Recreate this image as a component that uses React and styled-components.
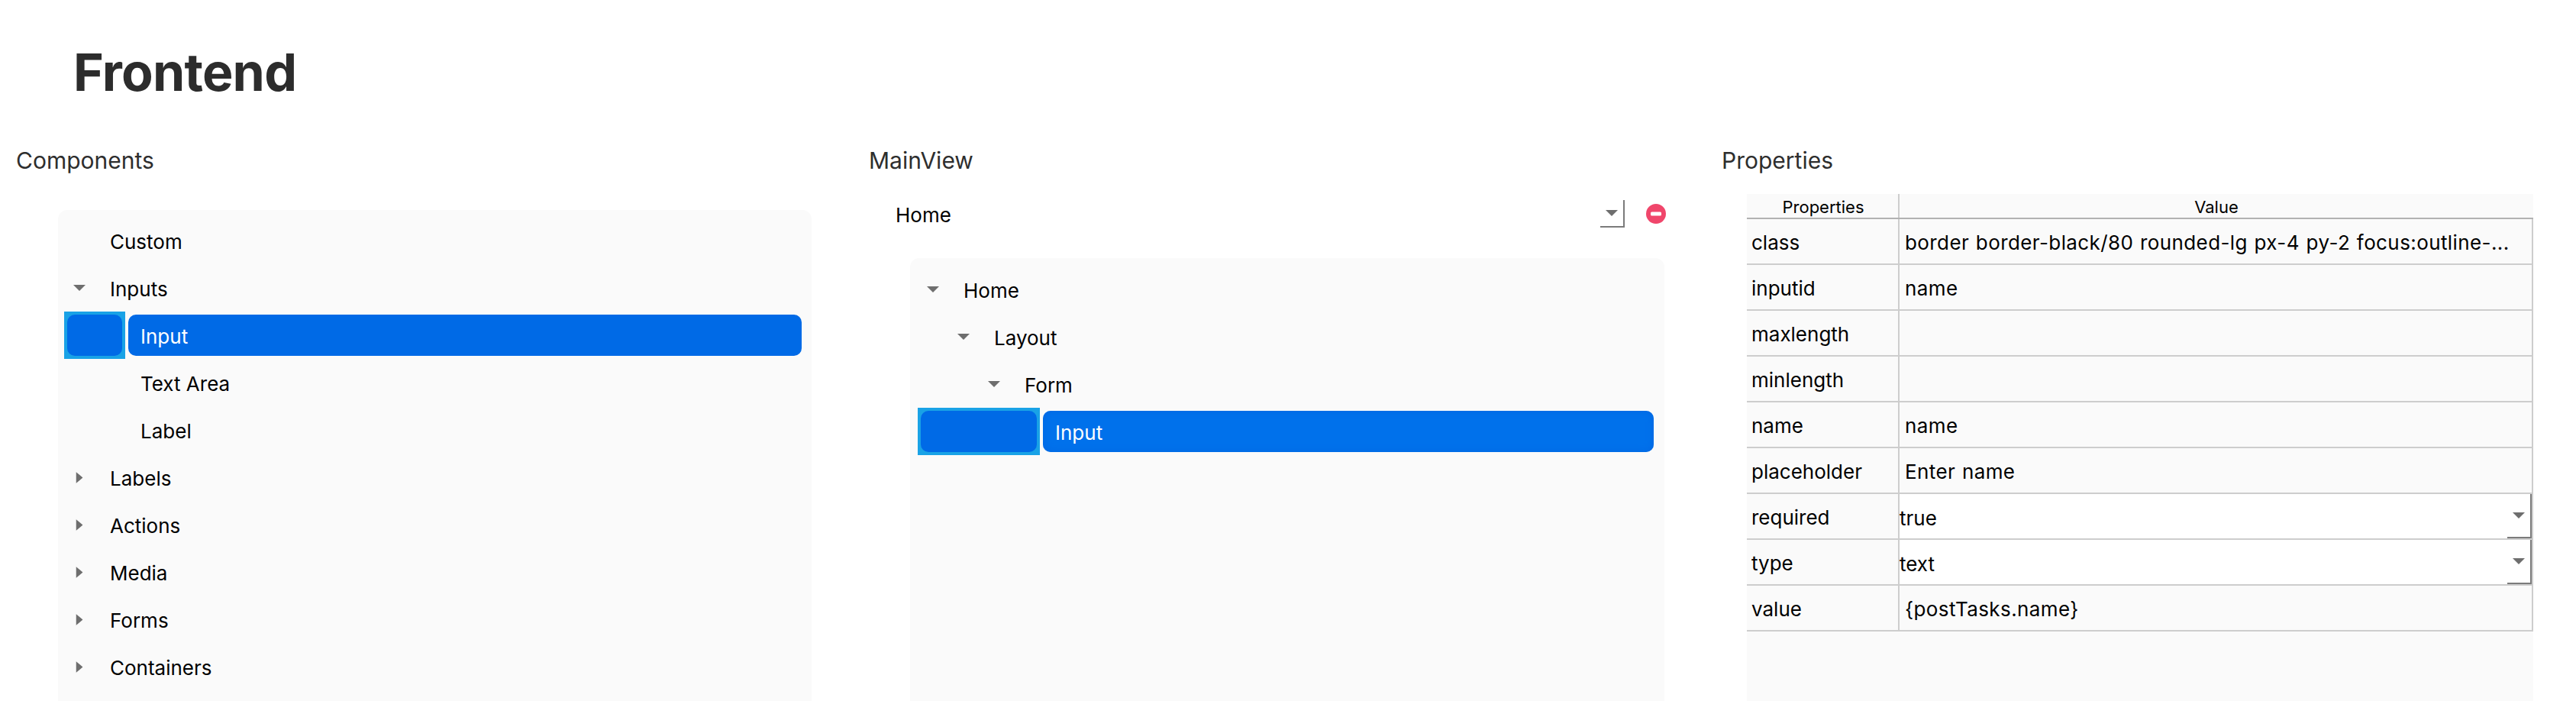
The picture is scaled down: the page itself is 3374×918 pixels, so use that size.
import React from "react";
import styled, { createGlobalStyle } from "styled-components";

const Global = createGlobalStyle`
  html, body { margin: 0; padding: 0; background: #fff; }
  body { font-family: Inter, "Liberation Sans", sans-serif; color: #000; }
  * { box-sizing: border-box; }
`;

const Page = styled.div`
  height: 918px;
  display: flex;
  flex-direction: column;
  overflow: hidden;
`;
const Header = styled.header`
  height: 180px;
  flex: none;
  padding: 54px 0 0 96px;
`;
const Title = styled.h1`
  margin: 0;
  font-size: 68px;
  line-height: 80px;
  font-weight: 700;
  letter-spacing: -0.8px;
  color: #2c2c2c;
`;
const Columns = styled.main`
  flex: 1;
  min-height: 0;
  display: grid;
  grid-template-columns: 1117px 1117px 1140px;
`;
const Column = styled.section`
  display: flex;
  flex-direction: column;
  min-height: 0;
`;
const SectionLabel = styled.h2`
  margin: 0 0 0 ${(p) => p.$left}px;
  height: 60px;
  flex: none;
  font-size: 30px;
  line-height: 60px;
  font-weight: 400;
  color: #2e2e2e;
`;
const Panel = styled.div`
  flex: 1;
  min-height: 0;
  margin-top: ${(p) => p.$top}px;
  margin-left: ${(p) => p.$left}px;
  width: ${(p) => p.$width}px;
  padding: ${(p) => p.$padTop}px ${(p) => p.$padRight}px 0 ${(p) => p.$padLeft}px;
  background: #fafafa;
  border-radius: 12px 12px 0 0;
`;
const TreeRow = styled.div`
  height: 62px;
  display: flex;
  align-items: center;
  padding-left: ${(p) => p.$depth * 40}px;
  font-size: 26px;
`;
const Expander = styled.span`
  width: 60px;
  flex: none;
  padding-left: 20px;
  display: flex;
`;
const Arrow = styled.svg`
  flex: none;
  fill: #6e6e6e;
  transform: translateX(-50%);
`;
const NodeText = styled.span`
  padding-top: 2px;
`;
const FocusBox = styled.span`
  flex: none;
  height: 62px;
  margin-left: ${(p) => -p.$depth * 40}px;
  width: ${(p) => 40 + p.$depth * 40}px;
  border: 4px solid #19a2e6;
  background: #19a2e6;
`;
const FocusFill = styled.span`
  display: block;
  height: 100%;
  background: #006ae6;
  border-radius: 10px;
`;
const Selection = styled.span`
  flex: 1;
  height: 54px;
  margin-left: 4px;
  padding: 2px 0 0 16px;
  display: flex;
  align-items: center;
  color: #fff;
  background: ${(p) => (p.$soft ? "#0071eb" : "#006ae6")};
  box-shadow: ${(p) => (p.$soft ? "inset 0 0 10px #0067e2" : "none")};
  border-radius: 10px;
`;
const Toolbar = styled.div`
  flex: none;
  display: flex;
  align-items: center;
  gap: 28px;
  margin: 22px 0 0 43px;
  height: 36px;
  width: 1022px;
`;
const Select = styled.div`
  flex: ${(p) => (p.$fill ? "1" : "none")};
  display: flex;
  align-items: center;
  height: 100%;
  min-width: 0;
  font-size: 26px;
  line-height: 32px;
`;
const SelectText = styled.span`
  flex: 1;
  padding-left: ${(p) => p.$pad}px;
  padding-top: ${(p) => p.$drop}px;
  white-space: nowrap;
`;
const Caret = styled.span`
  flex: none;
  width: 32px;
  height: 100%;
  display: flex;
  align-items: center;
  justify-content: center;
  border-right: 2px solid #7b7b7b;
  border-bottom: 2px solid #7b7b7b;
`;
const Remove = styled.svg`
  flex: none;
  display: block;
`;
const Table = styled.div`
  flex: 1;
  min-height: 0;
  margin: 14px 0 0 54px;
  width: 1030px;
  background: #fafafa;
  display: flex;
  flex-direction: column;
`;
const HeadRow = styled.div`
  flex: none;
  height: 33px;
  display: grid;
  grid-template-columns: 200px 1fr;
  border-bottom: 2px solid #b2b2b2;
  font-size: 22px;
  line-height: 35px;
  text-align: center;
`;
const HeadCell = styled.div`
  height: 31px;
  border-left: ${(p) => (p.$divide ? "2px solid #cdcdcd" : "none")};
  margin-left: ${(p) => (p.$divide ? "-2px" : 0)};
`;
const Row = styled.div`
  flex: none;
  height: 60px;
  display: grid;
  grid-template-columns: 198px 2px minmax(0, 1fr);
  grid-template-rows: 58px;
  border-bottom: 2px solid #cdcdcd;
  border-right: 2px solid #cdcdcd;
  font-size: 26px;
  line-height: 60px;
`;
const KeyCell = styled.div`
  padding: 1px 0 0 6px;
  grid-column: 1;
`;
const Rule = styled.div`
  background: #cdcdcd;
`;
const ValueCell = styled.div`
  padding: 1px 0 0 7px;
  white-space: nowrap;
  letter-spacing: 0.4px;
  word-spacing: 1px;
`;
const ChoiceCell = styled.div`
  background: #fff;
  min-width: 0;
  height: 58px;
`;

const Down = () => (
  <Arrow width="16" height="8" viewBox="0 0 16 8"><polygon points="0,0 16,0 8,8" /></Arrow>
);
const Right = () => (
  <Arrow width="9" height="15" viewBox="0 0 9 15"><polygon points="0,0 9,7.5 0,15" /></Arrow>
);
const PlainCaret = styled.svg`
  fill: #6e6e6e;
`;
const CaretIcon = () => (
  <PlainCaret width="16" height="8" viewBox="0 0 16 8"><polygon points="0,0 16,0 8,8" /></PlainCaret>
);

const Node = ({ depth = 0, state, children }) => (
  <TreeRow $depth={depth}>
    <Expander>{state === "open" ? <Down /> : state === "closed" ? <Right /> : null}</Expander>
    <NodeText>{children}</NodeText>
  </TreeRow>
);
const SelectedNode = ({ depth, soft, children }) => (
  <TreeRow $depth={depth}>
    <FocusBox $depth={depth}><FocusFill /></FocusBox>
    <Selection $soft={soft}>{children}</Selection>
  </TreeRow>
);

const props = [
  ["class", "border border-black/80 rounded-lg px-4 py-2 focus:outline-..."],
  ["inputid", "name"],
  ["maxlength", ""],
  ["minlength", ""],
  ["name", "name"],
  ["placeholder", "Enter name"],
  ["required", "true", true],
  ["type", "text", true],
  ["value", "{postTasks.name}"],
];

export default function App() {
  return (
    <Page>
      <Global />
      <Header><Title>Frontend</Title></Header>
      <Columns>
        <Column>
          <SectionLabel $left={21}>Components</SectionLabel>
          <Panel $top={35} $left={76} $width={987} $padTop={9} $padLeft={8} $padRight={13}>
            <Node>Custom</Node>
            <Node state="open">Inputs</Node>
            <SelectedNode depth={1}>Input</SelectedNode>
            <Node depth={1}>Text Area</Node>
            <Node depth={1}>Label</Node>
            <Node state="closed">Labels</Node>
            <Node state="closed">Actions</Node>
            <Node state="closed">Media</Node>
            <Node state="closed">Forms</Node>
            <Node state="closed">Containers</Node>
          </Panel>
        </Column>
        <Column>
          <SectionLabel $left={21}>MainView</SectionLabel>
          <Toolbar>
            <Select $fill>
              <SelectText $pad={13} $drop={3}>Home</SelectText>
              <Caret><CaretIcon /></Caret>
            </Select>
            <Remove width="26" height="26" viewBox="0 0 26 26">
              <circle cx="13" cy="13" r="13" fill="#f0466b" />
              <rect x="6" y="10.5" width="14" height="5" rx="1.5" fill="#fff" />
            </Remove>
          </Toolbar>
          <Panel $top={40} $left={75} $width={988} $padTop={10} $padLeft={10} $padRight={14}>
            <Node state="open">Home</Node>
            <Node depth={1} state="open">Layout</Node>
            <Node depth={2} state="open">Form</Node>
            <SelectedNode depth={3} soft>Input</SelectedNode>
          </Panel>
        </Column>
        <Column>
          <SectionLabel $left={21}>Properties</SectionLabel>
          <Table>
            <HeadRow>
              <HeadCell>Properties</HeadCell>
              <HeadCell $divide>Value</HeadCell>
            </HeadRow>
            {props.map(([k, v, choice]) => (
              <Row key={k}>
                <KeyCell>{k}</KeyCell>
                <Rule />
                {choice ? (
                  <ChoiceCell>
                    <Select>
                      <SelectText $pad={0} $drop={5}>{v}</SelectText>
                      <Caret><CaretIcon /></Caret>
                    </Select>
                  </ChoiceCell>
                ) : (
                  <ValueCell>{v}</ValueCell>
                )}
              </Row>
            ))}
          </Table>
        </Column>
      </Columns>
    </Page>
  );
}
